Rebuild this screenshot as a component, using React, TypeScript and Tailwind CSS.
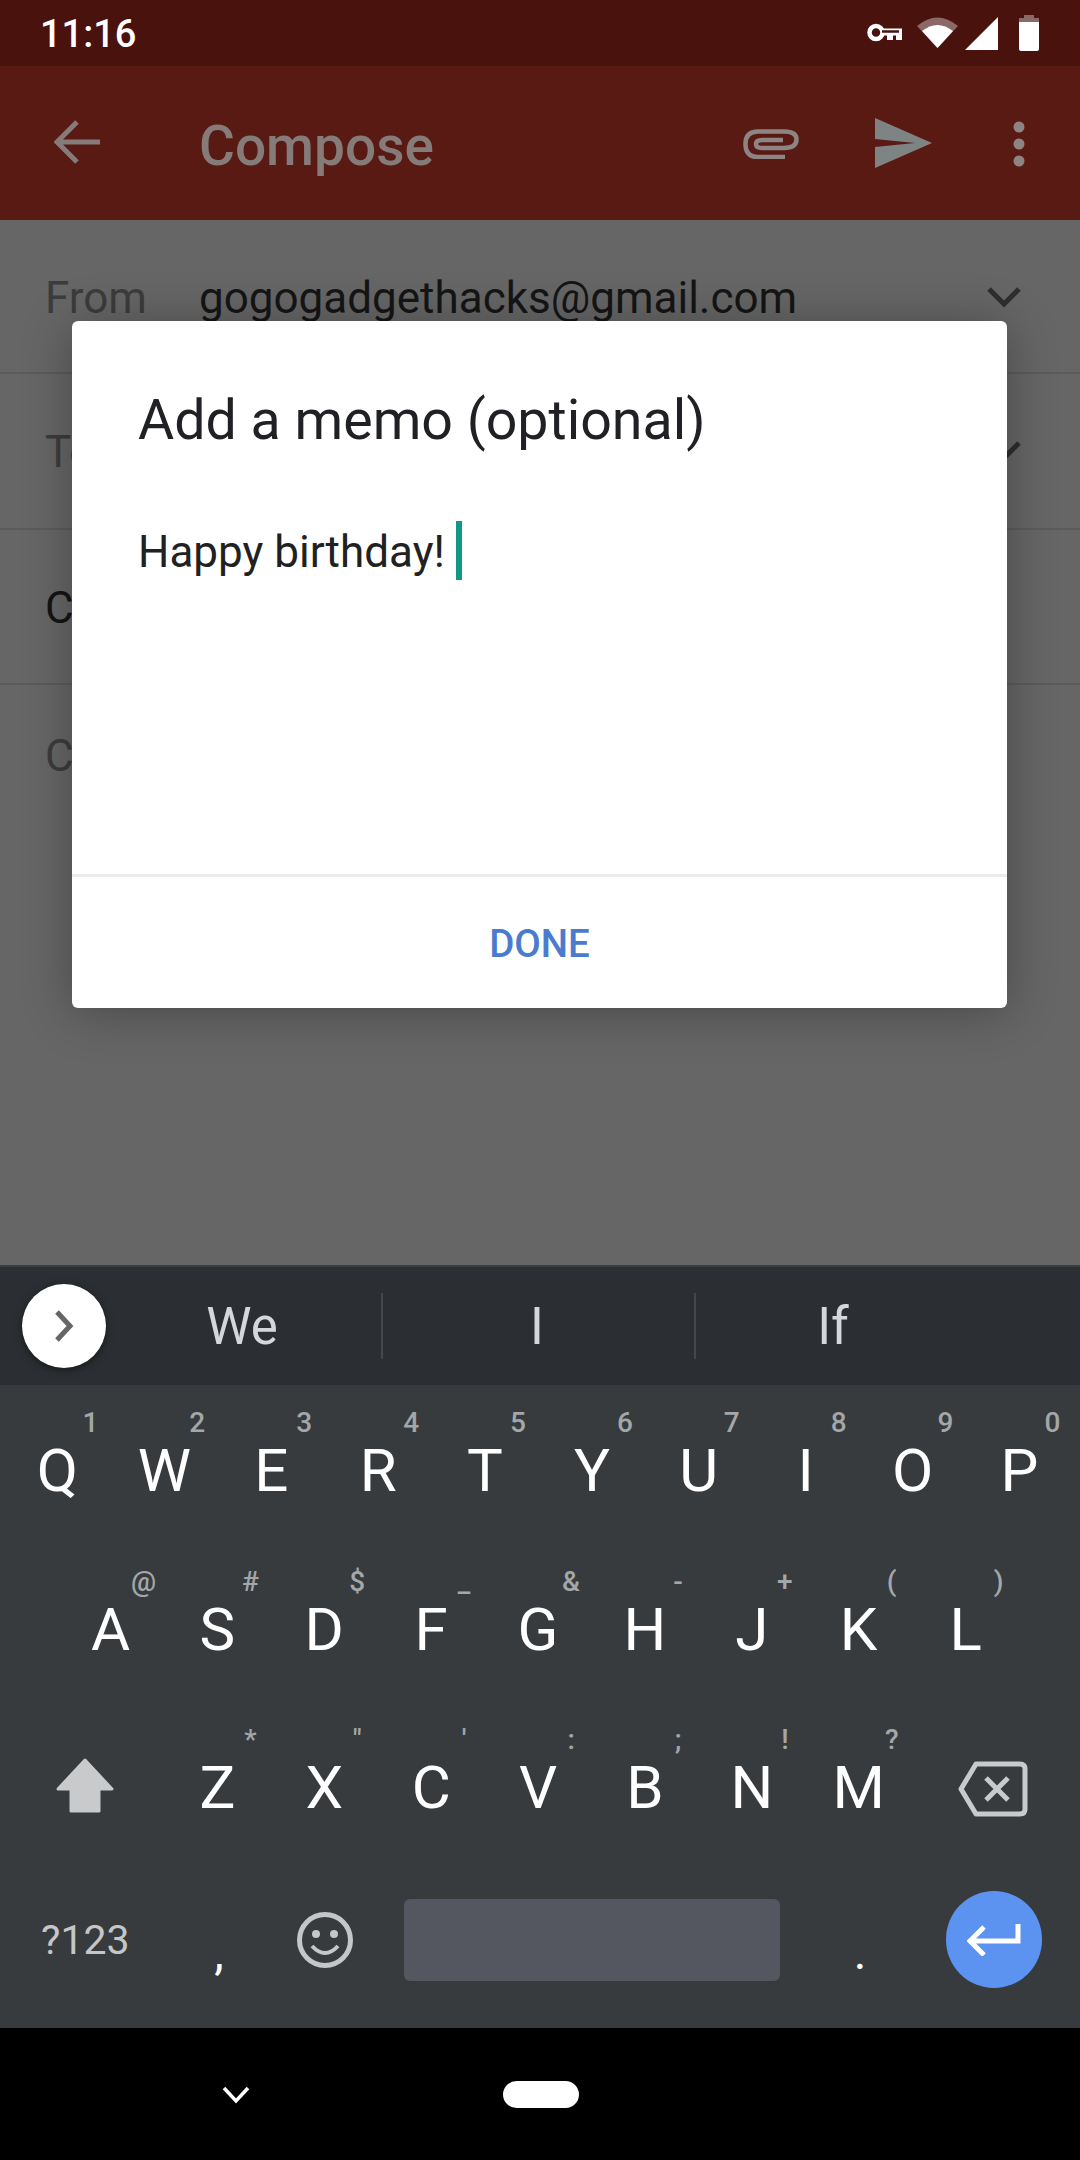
const row1: [string, string][] = [["Q","1"],["W","2"],["E","3"],["R","4"],["T","5"],["Y","6"],["U","7"],["I","8"],["O","9"],["P","0"]];
const row2: [string, string][] = [["A","@"],["S","#"],["D","$"],["F","_"],["G","&"],["H","-"],["J","+"],["K","("],["L",")"]];
const row3: [string, string][] = [["Z","*"],["X","\""],["C","'"],["V",":"],["B",";"],["N","!"],["M","?"]];

function Key({ k, h }: { k: string; h: string }) {
  return (
    <div className="relative w-[106.9px] shrink-0 pt-[33px] text-center text-[60px] leading-[105px] text-white">
      {k}
      <span className="absolute left-[calc(50%+33px)] top-[24px] -translate-x-1/2 text-[28px] font-medium leading-[28px] text-[#a3a7a9]">{h}</span>
    </div>
  );
}

function FormRow({ label, dark, value, chevron, cls }: { label: string; dark?: boolean; value?: string; chevron?: boolean; cls: string }) {
  return (
    <div className={`relative flex items-start pl-[45px] text-[44px] leading-[50px] ${cls}`}>
      <span className={dark ? "text-[#141414]" : "text-[#3c3c3c]"}>{label}</span>
      {value && <span className="absolute left-[199px] top-[53px] text-[#151515]">{value}</span>}
      {chevron && (
        <svg className="absolute left-[986px] top-[66px]" width="36" height="22" viewBox="0 0 36 22" fill="none">
          <path d="M3 3 L18 18 L33 3" stroke="#2e2e2e" strokeWidth="5" />
        </svg>
      )}
    </div>
  );
}

export default function App() {
  return (
    <div className="relative flex h-[2160px] w-[1080px] flex-col overflow-hidden bg-black font-['Roboto',sans-serif]">
      {/* status bar */}
      <div className="flex h-[66px] shrink-0 items-start bg-[#4a120c] pl-[40px] text-white">
        <span className="mt-[12px] text-[38px] font-medium leading-[44px]">11:16</span>
        <svg className="ml-auto mt-[23px]" width="35" height="19" viewBox="0 0 35 19" fill="none">
          <circle cx="9" cy="9.500" r="6.500" stroke="#fff" strokeWidth="4.500" />
          <path d="M15 5.500 H35 V17 H29 V12.500 H26 V17 H20 V12.500 H15 Z" fill="#fff" />
          <path d="M15 8.500 H32" stroke="#4a120c" strokeWidth="2.500" />
        </svg>
        <svg className="ml-[15px] mt-[16px]" width="41" height="32" viewBox="0 0 41 32">
          <path d="M0 10 Q20.500 -7 41 10 L20.500 32 Z" fill="#8a6a66" />
          <path d="M5 15 Q20.500 3 36 15 L20.500 32 Z" fill="#fff" />
        </svg>
        <svg className="ml-[7px] mt-[17px]" width="33" height="33" viewBox="0 0 33 33">
          <path d="M33 0 V33 H0 Z" fill="#fff" />
        </svg>
        <svg className="ml-[21px] mr-[41px] mt-[15px]" width="20" height="36" viewBox="0 0 20 36">
          <path d="M5 0 H15 V3 H20 V7 H0 V3 H5 Z" fill="#8a6a66" />
          <path d="M0 7 H20 V34 Q20 36 18 36 H2 Q0 36 0 34 Z" fill="#fff" />
        </svg>
      </div>

      {/* app bar */}
      <div className="flex h-[154px] shrink-0 items-start bg-[#5a1a14]">
        <svg className="ml-[54px] mt-[54px]" width="46" height="44" viewBox="0 0 46 44" fill="none">
          <path d="M23 2 L3 22 L23 42 M3 22 H46" stroke="#857b79" strokeWidth="5" />
        </svg>
        <span className="ml-[99px] mt-[50px] w-[233px] whitespace-nowrap text-[55px] font-medium leading-[60px] text-[#857b79]">Compose</span>
        <svg className="ml-[311px] mt-[63px]" width="56" height="30" viewBox="0 0 56 30" fill="none">
          <path d="M42 28 H15 Q2.500 28 2.500 15 Q2.500 2.500 15 2.500 H41 Q53.500 2.500 53.500 10.500 Q53.500 19 41 19 H19 Q13 19 13 15 Q13 11 19 11 H40" stroke="#8d8483" strokeWidth="4.500" />
        </svg>
        <svg className="ml-[76px] mt-[52px]" width="57" height="50" viewBox="0 0 57 50">
          <path d="M0 0 L57 25 L0 50 V29 L40 25 L0 21 Z" fill="#7e8484" />
        </svg>
        <svg className="ml-[81px] mt-[55px]" width="12" height="46" viewBox="0 0 12 46" fill="#8d8483">
          <circle cx="6" cy="6" r="5.500" />
          <circle cx="6" cy="23" r="5.500" />
          <circle cx="6" cy="40" r="5.500" />
        </svg>
      </div>

      {/* scrimmed compose form */}
      <div className="relative h-[1045px] shrink-0 bg-[#666666]">
        <FormRow label="From" value="gogogadgethacks@gmail.com" chevron cls="h-[154px] border-b-2 border-[#5b5b5b] pt-[53px]" />
        <FormRow label="To" chevron cls="h-[156px] border-b-2 border-[#5b5b5b] pt-[53px]" />
        <FormRow label="C" dark cls="h-[155px] border-b-2 border-[#5b5b5b] pt-[53px]" />
        <FormRow label="C" cls="h-[150px] pt-[46px]" />

        {/* dialog */}
        <div className="absolute left-[72px] top-[101px] flex h-[687px] w-[935px] flex-col rounded-[6px] bg-white shadow-[0_4px_50px_rgba(0,0,0,0.3)]">
          <div className="h-[553px] pl-[66px]">
            <div className="mt-[68px] text-[55.500px] leading-[64px] text-[#202124]">Add a memo (optional)</div>
            <div className="mt-[66px] flex items-center">
              <span className="pt-[3px] text-[44px] leading-[60px] text-[#212121]">Happy birthday!</span>
              <span className="ml-[11px] h-[59px] w-[6px] bg-[#129688]" />
            </div>
          </div>
          <div className="h-[3px] bg-[#ececec]" />
          <div className="flex flex-1 items-center justify-center pt-[2px] text-[38.500px] font-medium text-[#4a7bcf]">DONE</div>
        </div>
      </div>

      {/* suggestions */}
      <div className="relative flex h-[120px] shrink-0 items-center border-t-2 border-[#3a3e41] bg-[#2b2f33] text-[51px] text-[#d5d8da]">
        <div className="ml-[22px] flex h-[84px] w-[84px] shrink-0 items-center justify-center rounded-full bg-white shadow-[0_2px_8px_rgba(0,0,0,0.5)]">
          <svg width="20" height="32" viewBox="0 0 20 32" fill="none">
            <path d="M3 2 L16 16 L3 30" stroke="#666666" strokeWidth="5" />
          </svg>
        </div>
        <span className="ml-[-3px] w-[278px] pt-[2px] text-center">We</span>
        <span className="h-[66px] w-[2px] bg-[#44484b]" />
        <span className="ml-[-3px] w-[314px] pt-[2px] text-center">I</span>
        <span className="h-[66px] w-[2px] bg-[#44484b]" />
        <span className="ml-[-3px] w-[280px] pt-[2px] text-center">If</span>
      </div>

      {/* keyboard */}
      <div className="flex h-[643px] shrink-0 flex-col bg-[#373b3e]">
        <div className="flex h-[158.500px] pl-[4px]">
          {row1.map(([k, h]) => <Key key={k} k={k} h={h} />)}
        </div>
        <div className="flex h-[158.500px] pl-[57px]">
          {row2.map(([k, h]) => <Key key={k} k={k} h={h} />)}
        </div>
        <div className="flex h-[158.500px]">
          <div className="w-[164px] shrink-0 pl-[55px] pt-[56px]">
            <svg width="60" height="56" viewBox="0 0 60 56">
              <path d="M30 2 L57 31 H44 V53 H16 V31 H3 Z" fill="#c8cacb" stroke="#c8cacb" strokeWidth="3" strokeLinejoin="round" />
            </svg>
          </div>
          {row3.map(([k, h]) => <Key key={k} k={k} h={h} />)}
          <svg className="ml-[46px] mt-[59px]" width="70" height="56" viewBox="0 0 70 56" fill="none">
            <path d="M18 3 H62 Q67 3 67 8 V48 Q67 53 62 53 H18 L3 28 Z" stroke="#c8cacb" strokeWidth="5" strokeLinejoin="round" />
            <path d="M28 17 L50 39 M50 17 L28 39" stroke="#c8cacb" strokeWidth="5" />
          </svg>
        </div>
        <div className="flex h-[158px] items-center pl-[41px]">
          <span className="w-[88px] whitespace-nowrap text-[41px] leading-[50px] text-[#c4c6c7]">?123</span>
          <span className="ml-[70px] mt-[26px] w-[40px] text-center text-[48px] leading-[48px] text-white">,</span>
          <svg className="ml-[58px]" width="56" height="56" viewBox="0 0 56 56" fill="none">
            <circle cx="28" cy="28" r="25.500" stroke="#c4c6c7" strokeWidth="5" />
            <circle cx="19" cy="22" r="4" fill="#c4c6c7" />
            <circle cx="37" cy="22" r="4" fill="#c4c6c7" />
            <path d="M15 34 Q28 48 41 34" stroke="#c4c6c7" strokeWidth="4" />
          </svg>
          <div className="ml-[51px] h-[82px] w-[376px] rounded-[6px] bg-[#54575f]" />
          <span className="ml-[60px] mt-[26px] w-[40px] text-center text-[48px] leading-[48px] text-white">.</span>
          <div className="ml-[66px] flex h-[97px] w-[96px] items-center justify-center rounded-full bg-[#5c93f0]">
            <svg width="54" height="32" viewBox="0 0 54 32" fill="none">
              <path d="M51 0 V17 H4 M17 3 L3 17 L17 31" stroke="#fff" strokeWidth="5" />
            </svg>
          </div>
        </div>
      </div>

      {/* nav bar */}
      <div className="relative flex flex-1 items-start bg-black">
        <svg className="ml-[222px] mt-[58px]" width="28" height="18" viewBox="0 0 28 18" fill="none">
          <path d="M2 2 L14 15 L26 2" stroke="#fff" strokeWidth="3.500" />
        </svg>
        <div className="ml-[253px] mt-[53px] h-[27px] w-[76px] rounded-full bg-white" />
      </div>
    </div>
  );
}
